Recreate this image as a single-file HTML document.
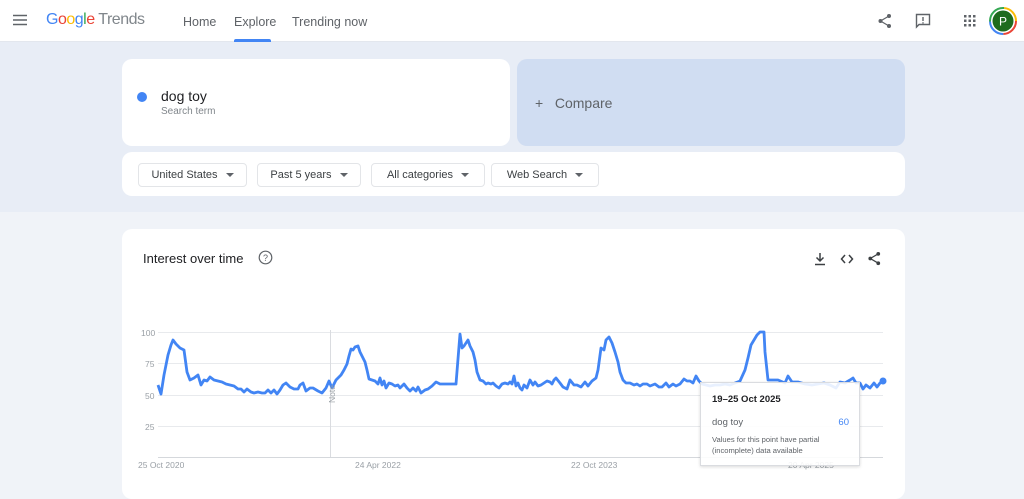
<!DOCTYPE html>
<html><head><meta charset="utf-8"><style>
*{margin:0;padding:0;box-sizing:border-box}
body{width:1024px;height:485px;overflow:hidden;background:#f0f3f8;font-family:"Liberation Sans",Arial,sans-serif;position:relative}
.hdr{position:absolute;left:0;top:0;width:1024px;height:42px;background:#fff;border-bottom:1px solid #e3e7ee}
.band{position:absolute;left:0;top:42px;width:1024px;height:170px;background:#e8edf6}
.abs{position:absolute}
.card{position:absolute;background:#fff;border-radius:10px}
.chip{position:absolute;top:163px;height:24px;border:1px solid #e3e5e8;border-radius:4px;font-size:11px;color:#3c4043;display:flex;align-items:center;justify-content:center;gap:8px;background:#fff}
.chip:after{content:"";border-left:4px solid transparent;border-right:4px solid transparent;border-top:4px solid #5f6368}
.nav{position:absolute;top:15px;font-size:12.5px;color:#5f6368}
.ax{position:absolute;font-size:8.5px;color:#9aa0a6}
</style></head><body>
<div class="hdr"></div>
<div class="band"></div>
<svg class="abs" style="left:13px;top:14px" width="14" height="12"><path d="M0 1.5H14M0 6H14M0 10.5H14" stroke="#5f6368" stroke-width="1.6"/></svg>
<div class="abs" style="left:46px;top:11px;font-size:16px;letter-spacing:-0.5px"><span style="color:#4285f4">G</span><span style="color:#ea4335">o</span><span style="color:#fbbc05">o</span><span style="color:#4285f4">g</span><span style="color:#34a853">l</span><span style="color:#ea4335">e</span><span style="color:#80868b"> Trends</span></div>
<div class="nav" style="left:183px">Home</div>
<div class="nav" style="left:234px">Explore</div>
<div class="nav" style="left:292px">Trending now</div>
<div class="abs" style="left:234px;top:39px;width:37px;height:3px;background:#4285f4;border-radius:2px 2px 0 0"></div>
<svg class="abs" style="left:877px;top:13px" width="16" height="16" viewBox="0 0 16 16"><circle cx="12" cy="3" r="2" fill="#5f6368"/><circle cx="3.5" cy="8" r="2" fill="#5f6368"/><circle cx="12" cy="13" r="2" fill="#5f6368"/><path d="M12 3L3.5 8L12 13" stroke="#5f6368" stroke-width="1.2" fill="none"/></svg>
<svg class="abs" style="left:915px;top:13px" width="16" height="16" viewBox="0 0 16 16"><path d="M1.5 1.5H14.5V11.5H4L1.5 14Z" stroke="#5f6368" stroke-width="1.4" fill="none"/><path d="M8 4V8M8 9.3V10.5" stroke="#5f6368" stroke-width="1.4"/></svg>
<svg class="abs" style="left:964px;top:15px" width="12" height="12"><g fill="#5f6368"><rect x="0" y="0" width="2.5" height="2.5"/><rect x="4.5" y="0" width="2.5" height="2.5"/><rect x="9" y="0" width="2.5" height="2.5"/><rect x="0" y="4.5" width="2.5" height="2.5"/><rect x="4.5" y="4.5" width="2.5" height="2.5"/><rect x="9" y="4.5" width="2.5" height="2.5"/><rect x="0" y="9" width="2.5" height="2.5"/><rect x="4.5" y="9" width="2.5" height="2.5"/><rect x="9" y="9" width="2.5" height="2.5"/></g></svg>
<svg class="abs" style="left:989px;top:7px" width="28" height="28"><circle cx="14" cy="14" r="13" fill="none" stroke="#ea4335" stroke-width="2" stroke-dasharray="20 62"/><circle cx="14" cy="14" r="13" fill="none" stroke="#4285f4" stroke-width="2" stroke-dasharray="0 20 20 62"/><circle cx="14" cy="14" r="13" fill="none" stroke="#34a853" stroke-width="2" stroke-dasharray="0 40 22 62"/><circle cx="14" cy="14" r="13" fill="none" stroke="#fbbc05" stroke-width="2" stroke-dasharray="0 62 20 62"/><circle cx="14" cy="14" r="10.5" fill="#1e6b1e"/><text x="14" y="18.5" font-size="12" fill="#fff" text-anchor="middle" font-family="Liberation Sans">P</text></svg>

<div class="card" style="left:122px;top:59px;width:388px;height:87px"></div>
<div class="abs" style="left:137px;top:92px;width:10px;height:10px;border-radius:50%;background:#4285f4"></div>
<div class="abs" style="left:161px;top:88px;font-size:14px;color:#202124">dog toy</div>
<div class="abs" style="left:161px;top:106px;font-size:10px;color:#80868b">Search term</div>
<div class="abs" style="left:517px;top:59px;width:388px;height:87px;border-radius:10px;background:#d0ddf2"></div>
<div class="abs" style="left:535px;top:95px;font-size:14px;color:#5f6368">+&nbsp;&nbsp;&nbsp;Compare</div>

<div class="card" style="left:122px;top:152px;width:783px;height:44px"></div>
<div class="chip" style="left:138px;width:109px">United States</div>
<div class="chip" style="left:257px;width:104px">Past 5 years</div>
<div class="chip" style="left:371px;width:114px">All categories</div>
<div class="chip" style="left:491px;width:108px">Web Search</div>

<div class="card" style="left:122px;top:229px;width:783px;height:270px"></div>
<div class="abs" style="left:143px;top:251px;font-size:13px;color:#202124">Interest over time</div>
<svg class="abs" style="left:258px;top:250px" width="15" height="15" viewBox="0 0 15 15"><circle cx="7.5" cy="7.5" r="6.3" fill="none" stroke="#5f6368" stroke-width="1.2"/><text x="7.5" y="11" font-size="9" text-anchor="middle" fill="#5f6368" font-family="Liberation Sans">?</text></svg>
<svg class="abs" style="left:813px;top:252px" width="14" height="14" viewBox="0 0 14 14"><path d="M7 1V9M3.5 5.5L7 9L10.5 5.5M2 12.5H12" stroke="#3c4043" stroke-width="1.5" fill="none"/></svg>
<svg class="abs" style="left:840px;top:252px" width="14" height="14" viewBox="0 0 14 14"><path d="M5 3L1.5 7L5 11M9 3L12.5 7L9 11" stroke="#3c4043" stroke-width="1.5" fill="none"/></svg>
<svg class="abs" style="left:867px;top:251px" width="15" height="15" viewBox="0 0 16 16"><circle cx="12" cy="3" r="2" fill="#3c4043"/><circle cx="3.5" cy="8" r="2" fill="#3c4043"/><circle cx="12" cy="13" r="2" fill="#3c4043"/><path d="M12 3L3.5 8L12 13" stroke="#3c4043" stroke-width="1.3" fill="none"/></svg>

<svg class="abs" style="left:0;top:0" width="1024" height="485">
<g stroke="#e8eaed" stroke-width="1"><path d="M158 332.5H883M158 363.5H883M158 395.5H883M158 426.5H883"/></g>
<path d="M158 457.5H883" stroke="#d5d8dc"/>
<path d="M330.5 330V457" stroke="#dadce0"/>
<polyline fill="none" stroke="#4285f4" stroke-width="2.8" stroke-linejoin="round" points="158,385 161,394 164,375 168,355 171,345 173,340 176,344 180,348 184,350 187,372 190,380 194,378 198,375 201,385 204,380 207,381 210,377 214,380 218,381 222,382 226,384 230,385 234,386 238,389 241,389 244,392 247,389 251,392 254,393 258,392 262,393 265,393 268,390 271,393 274,390 277,394 280,390 283,385 286,383 290,387 294,389 298,389 300,385 303,383 306,391 310,388 313,388 318,391 322,393 326,388 329,381 332,388 336,380 341,375 344,370 347,364 349,356 351,349 353,350 355,347 358,346 360,352 363,358 365,362 367,370 369,379 372,380 375,381 378,384 380,378 382,385 384,381 386,388 389,383 392,384 395,386 398,385 400,388 404,384 407,388 410,391 413,388 416,391 418,387 421,393 425,390 428,389 432,386 436,382 440,384 444,384 448,384 452,384 456,384 460,334 462,348 464,346 466,343 468,340 470,346 473,352 475,360 477,372 480,380 483,381 486,384 488,383 491,384 493,383 496,386 499,388 502,384 505,383 508,384 510,382 512,384 514,376 516,386 518,383 520,388 522,390 524,385 527,388 530,380 533,385 535,382 538,386 541,385 544,383 547,381 550,382 552,384 554,380 556,378 560,383 563,387 567,389 570,380 574,385 577,385 581,387 585,382 588,386 592,381 596,378 598,370 601,348 604,350 606,340 609,337 612,343 615,352 618,362 620,372 623,380 626,383 630,383 634,385 637,384 640,386 643,384 647,384 650,386 655,384 659,387 662,387 666,383 669,387 673,384 676,386 680,384 684,379 687,381 690,381 693,383 696,376 699,381 702,384 710,386 715,385 720,385 725,384 730,385 735,383 740,381 745,370 748,358 751,345 754,340 757,335 760,332 764,332 765,352 768,380 772,380 778,380 785,383 788,376 792,382 798,382 805,384 812,385 818,384 824,383 830,385 836,388 840,382 845,383 850,380 853,378 856,383 860,383 863,389 866,385 870,388 874,383 877,387 880,383 883,381"/>
<circle cx="883" cy="381" r="3.5" fill="#4285f4"/>
<text x="335" y="403" font-size="8.5" fill="#9aa0a6" transform="rotate(-90 335 403)" font-family="Liberation Sans">Note</text>
</svg>
<div class="ax" style="left:141px;top:328px">100</div>
<div class="ax" style="left:145px;top:359px">75</div>
<div class="ax" style="left:145px;top:391px">50</div>
<div class="ax" style="left:145px;top:422px">25</div>
<div class="ax" style="left:138px;top:460px">25 Oct 2020</div>
<div class="ax" style="left:355px;top:460px">24 Apr 2022</div>
<div class="ax" style="left:571px;top:460px">22 Oct 2023</div>
<div class="ax" style="left:788px;top:460px">20 Apr 2025</div>

<div class="abs" style="left:700px;top:382px;width:160px;height:84px;background:rgba(255,255,255,0.88);border:1px solid #dadce0;box-shadow:0 1px 3px rgba(0,0,0,0.15)">
<div class="abs" style="left:11px;top:11px;font-size:9.5px;font-weight:bold;color:#202124">19–25 Oct 2025</div>
<div class="abs" style="left:11px;top:34px;font-size:9.5px;color:#5f6368">dog toy</div>
<div class="abs" style="right:10px;top:34px;font-size:9.5px;color:#4285f4">60</div>
<div class="abs" style="left:11px;top:51px;font-size:7.6px;color:#5f6368;line-height:11px;width:145px">Values for this point have partial (incomplete) data available</div>
</div>
</body></html>
